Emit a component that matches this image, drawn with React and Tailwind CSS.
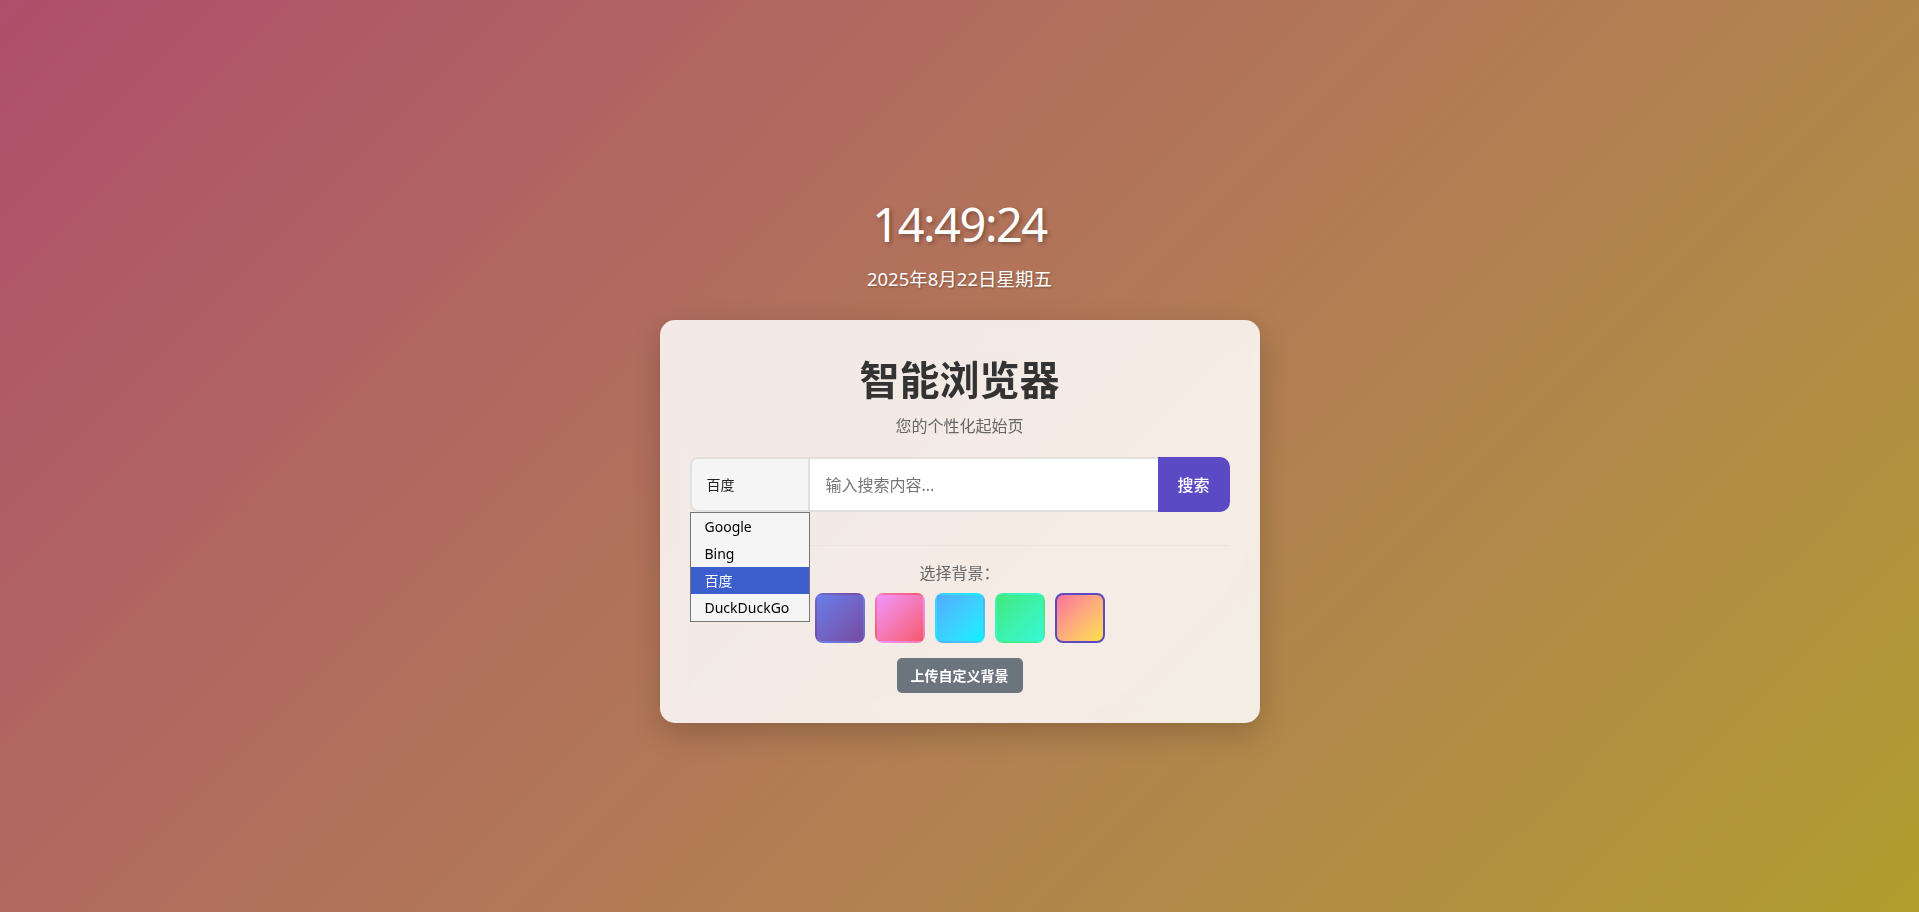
import React from "react";

const font = "font-['Noto_Sans','Noto_Sans_CJK_SC',sans-serif]";

const swatches = [
  { cls: "bg-linear-to-br from-[#667eea] to-[#764ba2] border-transparent" },
  { cls: "bg-linear-to-br from-[#f093fb] to-[#f5576c] border-transparent" },
  { cls: "bg-linear-to-br from-[#4facfe] to-[#00f2fe] border-transparent" },
  { cls: "bg-linear-to-br from-[#43e97b] to-[#38f9d7] border-transparent" },
  { cls: "bg-linear-to-br from-[#fa709a] to-[#fee140] border-[#5b4ac4]" },
];

const engines = ["Google", "Bing", "百度", "DuckDuckGo"];

export default function App() {
  return (
    <div className={`relative min-h-screen w-full bg-linear-135 from-[#fa709a] to-[#fee140] ${font}`}>
      {/* dark overlay */}
      <div className="min-h-screen w-full bg-black/30 flex flex-col items-center justify-center pt-[6px]">
        {/* Clock */}
        <div className="text-[47px] leading-[58px] font-normal tracking-[-1.5px] text-white [text-shadow:2px_2px_4px_rgba(0,0,0,0.3)]">
          14:49:24
        </div>
        <div className="mt-[12px] text-[18.5px] leading-[27px] text-white [text-shadow:1px_1px_2px_rgba(0,0,0,0.3)]">
          2025年8月22日星期五
        </div>

        {/* Card */}
        <div className="mt-[28px] w-[600px] rounded-[15px] bg-white/85 backdrop-blur-md shadow-[0_10px_30px_rgba(0,0,0,0.2)] p-[30px] flex flex-col items-center">
          <h1 className="text-[40px] leading-[60px] font-bold text-[#333]">智能浏览器</h1>
          <p className="mt-[4px] text-[16px] leading-[24px] text-[#666]">您的个性化起始页</p>

          {/* Search row */}
          <div className="relative mt-[19px] w-full h-[55px] flex">
            <div className="w-[120px] h-full flex items-center pl-[15px] bg-[#f5f5f5] border-2 border-[#e0e0e0] rounded-l-[8px] text-[14px] text-[#222]">
              百度
            </div>
            <div className="flex-1 h-full flex items-center pl-[16px] bg-white border-y-2 border-[#e0e0e0] text-[16px] text-[#757575]">
              输入搜索内容...
            </div>
            <button className="w-[72px] h-full bg-[#5b4ac4] text-white text-[16px] font-medium rounded-r-[10px]">
              搜索
            </button>

            {/* open select list */}
            <ul className="absolute left-0 top-[55px] w-[120px] bg-[#f5f5f5] border border-[#767676] z-10 text-[14px] text-black">
              {engines.map((e) => (
                <li
                  key={e}
                  className={`h-[27px] leading-[27px] pl-[14px] ${e === "百度" ? "bg-[#3c5fcd] text-white" : ""}`}
                >
                  {e}
                </li>
              ))}
            </ul>
          </div>

          {/* Background selector */}
          <div className="mt-[33px] w-full border-t border-black/[0.03] pt-[15px] flex flex-col items-center">
            <div className="text-[16px] leading-[24px] text-[#666]">选择背景：</div>
            <div className="mt-[8px] flex gap-[10px]">
              {swatches.map((s, i) => (
                <div key={i} className={`w-[50px] h-[50px] rounded-[8px] border-2 ${s.cls}`} />
              ))}
            </div>
            <button className="mt-[15px] h-[35px] px-[14px] rounded-[5px] bg-[#6c757d] text-white text-[14px] font-bold">
              上传自定义背景
            </button>
          </div>
        </div>
      </div>
    </div>
  );
}
